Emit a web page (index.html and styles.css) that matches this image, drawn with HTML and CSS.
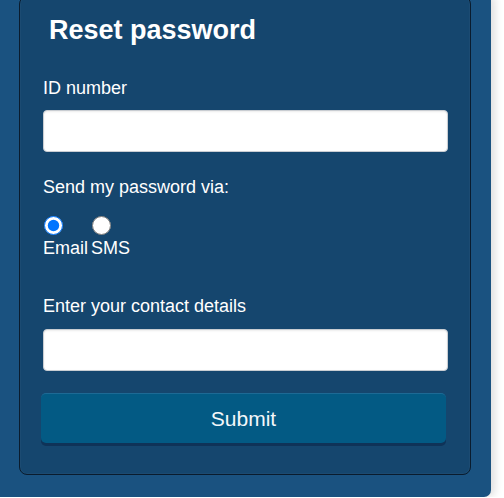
FILE: index.html
```html
<!DOCTYPE html>
<html lang="en">
<head>
<meta charset="utf-8">
<title>Reset password</title>
<link rel="stylesheet" href="styles.css">
</head>
<body>
<div class="panel">
  <form class="card">
    <h2 class="title">Reset password</h2>
    <label class="field-label label-id" for="idnum">ID number</label>
    <input class="text-input input-id" id="idnum" type="text">
    <span class="field-label label-via">Send my password via:</span>
    <div class="options">
      <label class="option">
        <input class="radio" type="radio" name="via" checked>
        <span class="option-text">Email</span>
      </label>
      <label class="option">
        <input class="radio" type="radio" name="via">
        <span class="option-text">SMS</span>
      </label>
    </div>
    <label class="field-label label-contact" for="contact">Enter your contact details</label>
    <input class="text-input input-contact" id="contact" type="text">
    <button class="submit" type="button">Submit</button>
  </form>
</div>
</body>
</html>
```
FILE: styles.css
```css
html, body {
  margin: 0;
  padding: 0;
  background: #ffffff;
}

body {
  font-family: "Liberation Sans", Arial, sans-serif;
  color: #ffffff;
}

.panel {
  width: 491px;
  box-sizing: border-box;
  background: #1a5280;
  padding: 0 20px 22px 19px;
  border-radius: 0 0 7px 0;
  box-shadow: 4px 0 8px rgba(0, 0, 0, 0.13);
}

.card {
  display: flex;
  flex-direction: column;
  align-items: flex-start;
  margin: -4px 0 0 0;
  width: 452px;
  box-sizing: border-box;
  background: #15466e;
  border: 1px solid #0a1c2e;
  border-radius: 8px;
  padding: 0 22px 31px 23px;
  box-shadow: inset 0 0 0 1px rgba(255, 255, 255, 0.03);
}

.title {
  margin: 18px 0 0 6px;
  font-size: 27px;
  line-height: 31px;
  font-weight: 700;
  color: #ffffff;
}

.field-label {
  display: block;
  font-size: 18px;
  line-height: 21px;
  color: #ffffff;
}

.label-id {
  margin-top: 32px;
}

.label-via {
  margin-top: 25px;
}

.label-contact {
  margin-top: 37px;
}

.text-input {
  display: block;
  box-sizing: border-box;
  width: 405px;
  height: 42px;
  margin: 0;
  padding: 0 10px;
  background: #ffffff;
  border: 1px solid #c9cdd2;
  border-radius: 4px;
  box-shadow: inset 0 1px 2px rgba(0, 0, 0, 0.08);
  font: 18px "Liberation Sans", Arial, sans-serif;
}

.input-id {
  margin-top: 11px;
}

.input-contact {
  margin-top: 12px;
}

.options {
  display: flex;
  gap: 3px;
  margin: 18px 0 0 0;
}

.option {
  display: flex;
  flex-direction: column;
  align-items: flex-start;
}

.radio {
  width: 19px;
  height: 19px;
  margin: 0 0 0 1px;
}

.option-text {
  margin-top: 3px;
  font-size: 18px;
  line-height: 21px;
}

.submit {
  margin: 22px 0 0 -2px;
  width: 405px;
  height: 50px;
  box-sizing: border-box;
  background: #035a84;
  border: none;
  border-top: 1px solid #1d6a95;
  border-radius: 5px;
  box-shadow: 0 3px 0 #0f3358;
  color: #f4f7fa;
  font: 21px "Liberation Sans", Arial, sans-serif;
  cursor: pointer;
}
```
